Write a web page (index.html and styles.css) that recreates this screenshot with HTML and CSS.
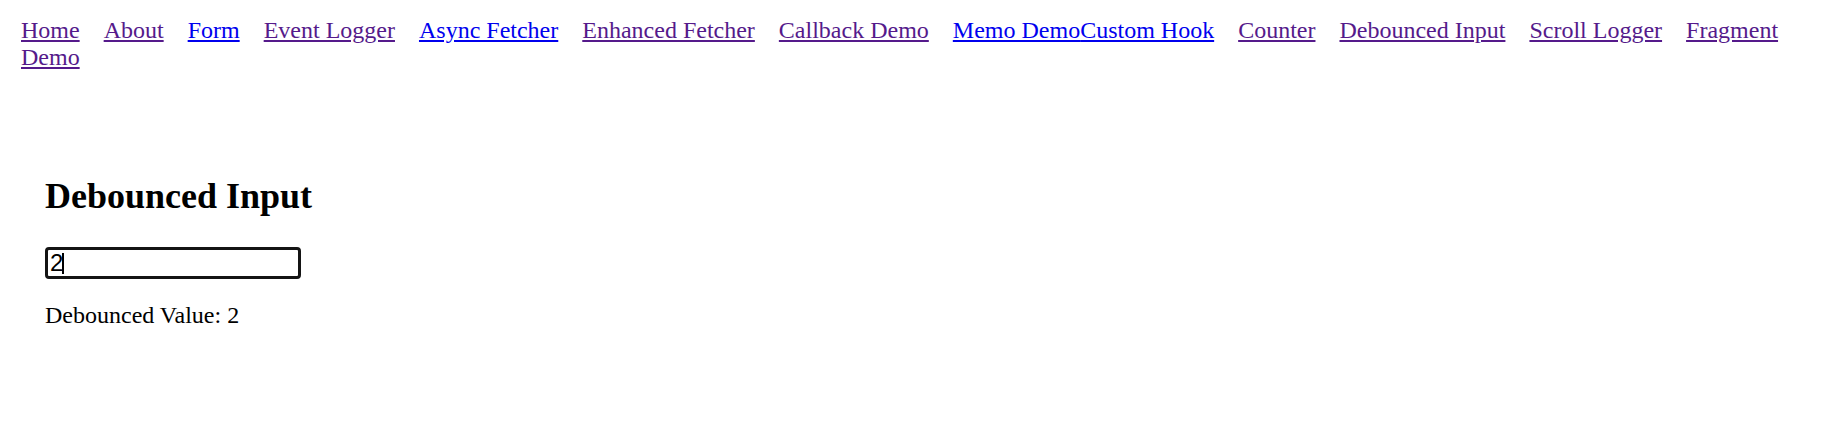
FILE: index.html
```html
<!DOCTYPE html>
<html lang="en">
<head>
<meta charset="utf-8">
<title>Debounced Input</title>
<link rel="stylesheet" href="styles.css">
</head>
<body>
<nav class="nav"><a class="link visited" href="#home">Home</a><a class="link visited" href="#about">About</a><a class="link" href="#form">Form</a><a class="link visited" href="#event-logger">Event Logger</a><a class="link" href="#async-fetcher">Async Fetcher</a><a class="link visited" href="#enhanced-fetcher">Enhanced Fetcher</a><a class="link visited" href="#callback-demo">Callback Demo</a><a class="link joined" href="#memo-demo">Memo Demo</a><a class="link" href="#custom-hook">Custom Hook</a><a class="link visited" href="#counter">Counter</a><a class="link visited" href="#debounced-input">Debounced Input</a><a class="link visited" href="#scroll-logger">Scroll Logger</a><a class="link visited" href="#fragment-demo">Fragment Demo</a></nav>
<main class="content">
  <h2 class="title">Debounced Input</h2>
  <div class="field">
    <input class="text-input" type="text" value="2" aria-label="Debounced input">
    <span class="caret"></span>
  </div>
  <p class="value">Debounced Value: 2</p>
</main>
</body>
</html>
```

FILE: styles.css
```css
html, body {
  background: #ffffff;
}

body {
  margin: 0;
  font-family: "Liberation Serif", "Times New Roman", serif;
  font-size: 24px;
  color: #000000;
}

.nav {
  padding: 17px 21px 0 21px;
  line-height: normal;
}

.link {
  color: #0000ee;
  text-decoration: underline;
  margin-right: 24px;
}

.link.visited {
  color: #551a8b;
}

.link.joined {
  margin-right: 0;
}

.content {
  padding: 73.5px 45px 0 45px;
}

.title {
  margin: 30px 0 30px 0;
  font-size: 36px;
  font-weight: bold;
  line-height: normal;
}

.field {
  position: relative;
  width: 256px;
  height: 32px;
}

.text-input {
  display: block;
  box-sizing: border-box;
  width: 256px;
  height: 32px;
  margin: 0;
  padding: 0 2px;
  border: 3px solid #141414;
  border-radius: 4px;
  font-family: "Liberation Sans", Arial, sans-serif;
  font-size: 24px;
  color: #000000;
  background: #ffffff;
  outline: none;
  caret-color: transparent;
}

.caret {
  position: absolute;
  left: 17px;
  top: 6px;
  width: 2px;
  height: 21px;
  background: #000000;
}

.value {
  margin: 23px 0 0 0;
  line-height: normal;
}
```
